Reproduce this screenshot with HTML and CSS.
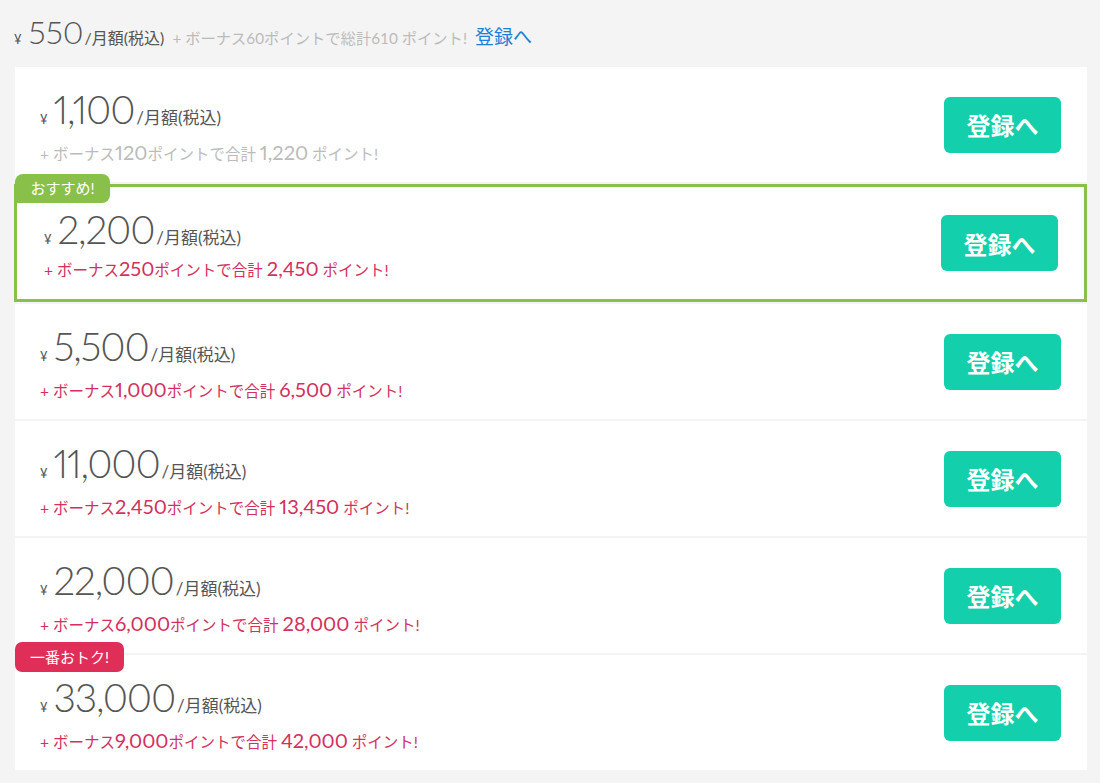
FILE: index.html
```html
<!DOCTYPE html>
<html lang="ja">
<head>
<meta charset="utf-8">
<title>プラン</title>
<link rel="stylesheet" href="styles.css">
</head>
<body>
<div class="page">
  <div class="top">
    <span class="top-yen">¥</span><span class="top-num">550</span><span class="top-unit">/月額(税込)</span>
    <span class="top-bonus">+ ボーナス60ポイントで総計610 ポイント!</span>
    <a class="top-link" href="#">登録へ</a>
  </div>
  <div class="plans">
    <div class="plan plan-muted">
      <div class="info">
        <div class="price"><span class="yen">¥</span><span class="num">1,100</span><span class="unit">/月額(税込)</span></div>
        <div class="bonus">+ ボーナス<span class="b-num">120</span>ポイントで合計 <span class="b-total">1,220</span> ポイント!</div>
      </div>
      <button class="btn">登録へ</button>
    </div>
    <div class="plan plan-featured">
      <span class="badge badge-green">おすすめ!</span>
      <div class="info">
        <div class="price"><span class="yen">¥</span><span class="num">2,200</span><span class="unit">/月額(税込)</span></div>
        <div class="bonus">+ ボーナス<span class="b-num">250</span>ポイントで合計 <span class="b-total">2,450</span> ポイント!</div>
      </div>
      <button class="btn">登録へ</button>
    </div>
    <div class="plan">
      <div class="info">
        <div class="price"><span class="yen">¥</span><span class="num">5,500</span><span class="unit">/月額(税込)</span></div>
        <div class="bonus">+ ボーナス<span class="b-num">1,000</span>ポイントで合計 <span class="b-total">6,500</span> ポイント!</div>
      </div>
      <button class="btn">登録へ</button>
    </div>
    <div class="plan">
      <div class="info">
        <div class="price"><span class="yen">¥</span><span class="num">11,000</span><span class="unit">/月額(税込)</span></div>
        <div class="bonus">+ ボーナス<span class="b-num">2,450</span>ポイントで合計 <span class="b-total">13,450</span> ポイント!</div>
      </div>
      <button class="btn">登録へ</button>
    </div>
    <div class="plan">
      <div class="info">
        <div class="price"><span class="yen">¥</span><span class="num">22,000</span><span class="unit">/月額(税込)</span></div>
        <div class="bonus">+ ボーナス<span class="b-num">6,000</span>ポイントで合計 <span class="b-total">28,000</span> ポイント!</div>
      </div>
      <button class="btn">登録へ</button>
    </div>
    <div class="plan">
      <span class="badge badge-red">一番おトク!</span>
      <div class="info">
        <div class="price"><span class="yen">¥</span><span class="num">33,000</span><span class="unit">/月額(税込)</span></div>
        <div class="bonus">+ ボーナス<span class="b-num">9,000</span>ポイントで合計 <span class="b-total">42,000</span> ポイント!</div>
      </div>
      <button class="btn">登録へ</button>
    </div>
  </div>
</div>
</body>
</html>
```
FILE: styles.css
```css
* { box-sizing: border-box; }
html, body {
  margin: 0;
  padding: 0;
  background: #f4f4f4;
}
body {
  font-family: "Lato", "Noto Sans CJK JP", "Noto Sans", sans-serif;
  color: #555;
}
.page {
  width: 1100px;
  height: 783px;
  overflow: hidden;
}
.top {
  height: 67px;
  padding: 14px 0 0 14px;
  display: flex;
  align-items: baseline;
  white-space: nowrap;
}
.top-yen {
  font-size: 13px;
  color: #555;
  margin-right: 7px;
}
.top-num {
  font-size: 32px;
  font-weight: 300;
  color: #555;
  line-height: 36px;
  font-variant-numeric: proportional-nums;
}
.top-unit {
  font-size: 16px;
  color: #555;
  margin-left: 1px;
}
.top-bonus {
  font-size: 15.3px;
  color: #bbb;
  margin-left: 8px;
}
.top-link {
  font-size: 19px;
  color: #1e7fd6;
  text-decoration: none;
  margin-left: 8px;
}
.plans {
  margin: 0 13px 0 15px;
  display: flex;
  flex-direction: column;
  gap: 2px;
}
.plan {
  position: relative;
  height: 115px;
  background: #fff;
  display: flex;
  align-items: center;
  justify-content: space-between;
  padding: 0 26px 0 25px;
}
.plan-featured {
  height: 118px;
  margin-left: -1px;
  border: 3px solid #88c04a;
  padding: 0 26px 0 27px;
}
.info {
  align-self: stretch;
  display: flex;
  flex-direction: column;
  padding-top: 20px;
}
.plan-featured .info {
  padding-top: 20px;
}
.price {
  display: flex;
  align-items: baseline;
  height: 44px;
  white-space: nowrap;
}
.yen {
  font-size: 13px;
  color: #555;
  margin-right: 6px;
}
.num {
  font-size: 39px;
  font-weight: 300;
  color: #555;
  line-height: 44px;
  letter-spacing: -1.2px;
  font-variant-numeric: proportional-nums;
}
.unit {
  font-size: 17px;
  color: #555;
  margin-left: 2px;
}
.bonus {
  margin-top: 9px;
  font-size: 15.5px;
  color: #d2305e;
  white-space: nowrap;
  line-height: 24px;
}
.plan-featured .bonus {
  margin-top: 5px;
}
.plan-muted .bonus {
  color: #bbb;
}
.b-num, .b-total {
  font-size: 20px;
  font-variant-numeric: proportional-nums;
}
.btn {
  width: 117px;
  height: 56px;
  border: none;
  border-radius: 6px;
  background: #13cfac;
  color: #fff;
  font-family: "Noto Sans CJK JP", "Noto Sans", sans-serif;
  font-weight: 700;
  font-size: 24px;
  padding: 0;
}
.badge {
  position: absolute;
  left: 0;
  color: #fff;
  font-size: 15px;
  line-height: 1;
  display: flex;
  align-items: center;
  justify-content: center;
}
.badge-green {
  top: -13px;
  left: -2px;
  width: 95px;
  height: 29px;
  background: #88c04a;
  border-radius: 8px 8px 8px 0;
}
.badge-red {
  top: -13px;
  width: 109px;
  height: 30px;
  background: #df2f58;
  border-radius: 7px;
}
```
